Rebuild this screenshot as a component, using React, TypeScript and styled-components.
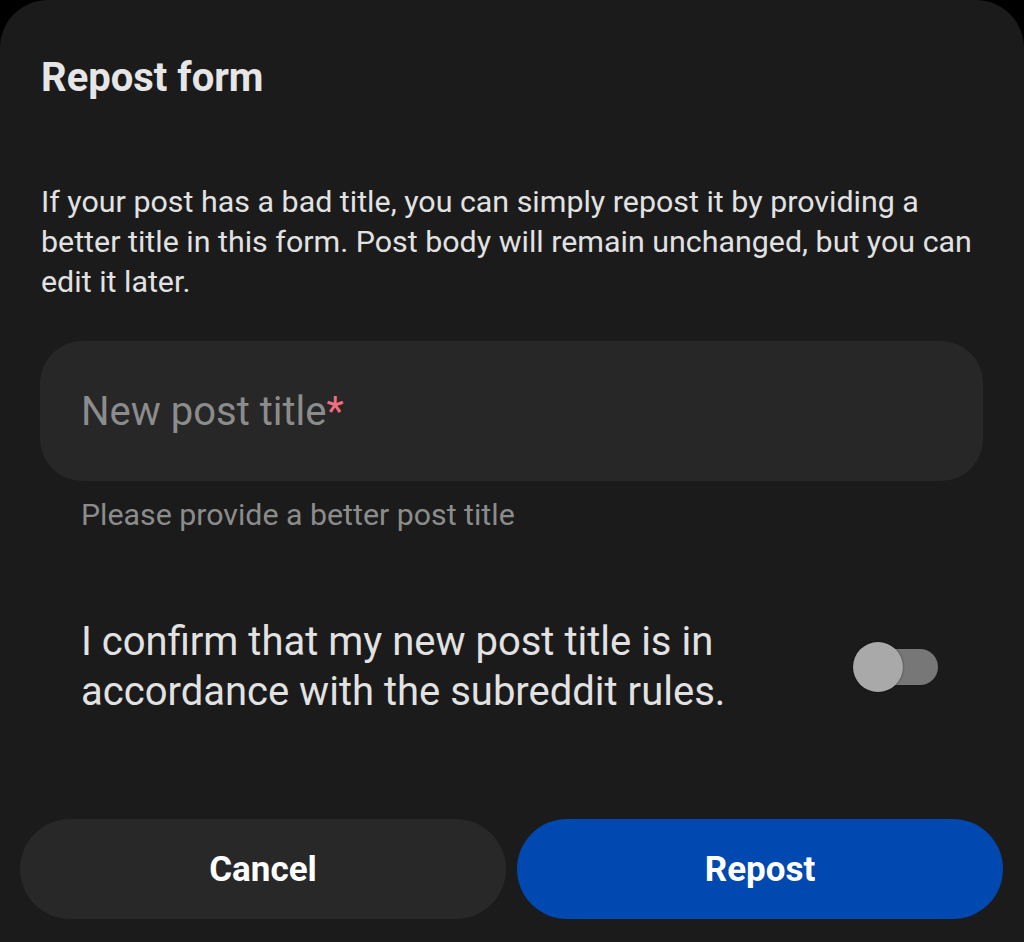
import styled, { createGlobalStyle } from "styled-components";
import { useState } from "react";

const GlobalStyle = createGlobalStyle`
    html, body {
        margin: 0;
        padding: 0;
        background: #000;
    }
    body {
        font-family: Roboto, "Liberation Sans", sans-serif;
        -webkit-font-smoothing: antialiased;
    }
    * {
        box-sizing: border-box;
    }
`;

export default function App() {
    const [title, setTitle] = useState("");
    const [confirmed, setConfirmed] = useState(false);

    return (
        <>
            <GlobalStyle />
            <Sheet>
                <Title>Repost form</Title>
                <Description>
                    If your post has a bad title, you can simply repost it by providing a
                    better title in this form. Post body will remain unchanged, but you can
                    edit it later.
                </Description>

                <Field>
                    <FieldInput value={title} onChange={(e) => setTitle(e.target.value)} />
                    {title === "" && (
                        <Placeholder>
                            New post title<Required>*</Required>
                        </Placeholder>
                    )}
                </Field>
                <Helper>Please provide a better post title</Helper>

                <ConfirmRow>
                    <ConfirmText>
                        I confirm that my new post title is in accordance with the subreddit rules.
                    </ConfirmText>
                    <Switch $on={confirmed} onClick={() => setConfirmed(!confirmed)}>
                        <Thumb $on={confirmed} />
                    </Switch>
                </ConfirmRow>

                <Actions>
                    <ActionBtn>Cancel</ActionBtn>
                    <ActionBtn $primary>Repost</ActionBtn>
                </Actions>
            </Sheet>
        </>
    );
}

const Sheet = styled.div`
    display: flex;
    flex-direction: column;
    width: 1024px;
    height: 942px;
    background-color: #1b1b1b;
    border-radius: 48px 48px 0 0;
    overflow: hidden;
`;

const Title = styled.h1`
    margin: 54px 0 0 41px;
    font-size: 40px;
    font-weight: 700;
    line-height: 48px;
    color: #e6e6e6;
`;

const Description = styled.p`
    margin: 80px 40px 0 41px;
    font-size: 30.4px;
    line-height: 40px;
    color: #e2e2e2;
`;

const Field = styled.label`
    position: relative;
    display: flex;
    align-items: center;
    margin: 39px 41px 0 40px;
    height: 140px;
    border-radius: 42px;
    background-color: #272727;
`;

const FieldInput = styled.input`
    width: 100%;
    height: 100%;
    padding: 0 41px;
    border: none;
    outline: none;
    background: transparent;
    font-family: inherit;
    font-size: 40px;
    color: #e6e6e6;
`;

const Placeholder = styled.span`
    position: absolute;
    left: 41px;
    top: 50%;
    transform: translateY(-50%);
    font-size: 40px;
    color: #8c8c8c;
    pointer-events: none;
`;

const Required = styled.span`
    color: #ef6f80;
`;

const Helper = styled.div`
    margin: 16px 0 0 81px;
    font-size: 30.3px;
    line-height: 36px;
    color: #8c8c8c;
`;

const ConfirmRow = styled.div`
    display: flex;
    align-items: center;
    justify-content: space-between;
    margin: 84px 86px 0 81px;
`;

const ConfirmText = styled.div`
    width: 700px;
    font-size: 40px;
    line-height: 50px;
    color: #e2e2e2;
`;

const Switch = styled.button<{ $on: boolean }>`
    position: relative;
    width: 72px;
    height: 36px;
    padding: 0;
    border: none;
    border-radius: 18px;
    background-color: ${(p) => (p.$on ? "#3a6ed0" : "#777")};
    cursor: pointer;
`;

const Thumb = styled.span<{ $on: boolean }>`
    position: absolute;
    top: 50%;
    left: ${(p) => (p.$on ? "34px" : "-13px")};
    width: 50px;
    height: 50px;
    border-radius: 50%;
    background-color: #a9a9a9;
    box-shadow: 0 0 2px rgba(0, 0, 0, 0.6);
    transform: translateY(-50%);
`;

const Actions = styled.div`
    display: flex;
    gap: 11px;
    margin: auto 21px 23px 20px;
`;

const ActionBtn = styled.button<{ $primary?: boolean }>`
    flex: 1;
    height: 100px;
    border: none;
    border-radius: 50px;
    background-color: ${(p) => (p.$primary ? "#0148b0" : "#282828")};
    color: #fff;
    font-family: inherit;
    font-size: 35px;
    font-weight: 700;
    cursor: pointer;
`;
